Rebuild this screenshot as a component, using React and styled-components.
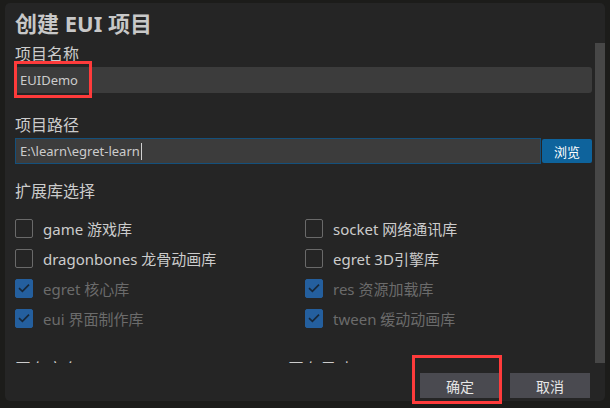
import React from "react";
import styled, { createGlobalStyle } from "styled-components";

const Global = createGlobalStyle`
  html, body { margin: 0; padding: 0; background: #1c1c1a; }
  body { font-family: "Noto Sans", "Noto Sans CJK SC", sans-serif; }
  * { box-sizing: border-box; }
`;

const Page = styled.div`
  width: 610px;
  height: 408px;
  padding: 3px 5px 0 5px;
  overflow: hidden;
`;

const Dialog = styled.div`
  position: relative;
  width: 600px;
  height: 398px;
  background: #252525;
  border-radius: 5px;
  display: flex;
  flex-direction: column;
`;

const Body = styled.div`
  height: 360px;
  display: flex;
  overflow: hidden;
`;

const Content = styled.div`
  flex: 1;
  padding: 5px 3px 0 10px;
  display: flex;
  flex-direction: column;
`;

const Track = styled.div`
  width: 10px;
  padding-top: 40px;
  display: flex;
`;

const Thumb = styled.div`
  flex: 1;
  background: #474747;
`;

const Title = styled.h1`
  margin: 0;
  font-size: 22px;
  line-height: 30px;
  font-weight: 700;
  color: #c8c8c8;
`;

const Label = styled.div`
  margin-top: ${(p) => p.$mt}px;
  font-size: 16px;
  line-height: 20px;
  color: #cccccc;
  font-family: "Noto Sans CJK SC", "Noto Sans", sans-serif;
`;

const Field = styled.div`
  margin-top: 4px;
  height: ${(p) => p.$h}px;
  background: #3c3c3c;
  border-radius: 3px;
  border: 1px solid ${(p) => (p.$focus ? "#14507c" : "transparent")};
  display: flex;
  align-items: center;
  padding-left: 4px;
  font-size: 13px;
  color: #cccccc;
  flex: 1;
`;

const Caret = styled.span`
  display: inline-block;
  width: 1px;
  height: 17px;
  background: #d0d0d0;
  margin-left: 1px;
`;

const PathRow = styled.div`
  margin-top: 4px;
  display: flex;
  align-items: center;
  gap: 1px;
  & > ${Field} { margin-top: 0; border-radius: 0; }
`;

const BrowseBtn = styled.button`
  width: 50px;
  height: 24px;
  border: none;
  border-radius: 2px;
  background: #0e639c;
  color: #ffffff;
  font-size: 13px;
  font-family: "Noto Sans CJK SC", sans-serif;
  padding: 0;
`;

const Grid = styled.div`
  margin-top: 13px;
  display: grid;
  grid-template-columns: 290px 1fr;
  grid-auto-rows: 30px;
`;

const Option = styled.div`
  display: flex;
  align-items: center;
  gap: 10px;
  font-size: 15px;
  color: ${(p) => (p.$checked ? "#6b6b6b" : "#cccccc")};
`;

const Box = styled.span`
  width: 18px;
  height: 19px;
  border-radius: 2px;
  border: 1px solid ${(p) => (p.$checked ? "#245f9e" : "#6a6a6a")};
  background: ${(p) => (p.$checked ? "#245f9e" : "transparent")};
  display: flex;
  align-items: center;
  justify-content: center;
  flex: none;
`;

const CutRow = styled.div`
  margin-top: 25px;
  display: grid;
  grid-template-columns: 273px 1fr;
`;

const Footer = styled.div`
  display: flex;
  justify-content: flex-end;
  gap: 10px;
  padding: 10px 15px 0 0;
`;

const FootBtn = styled.button`
  width: 80px;
  height: 25px;
  border: none;
  border-radius: 0;
  background: #4a4a50;
  color: #e6e6e6;
  font-size: 14px;
  font-family: "Noto Sans CJK SC", sans-serif;
  padding: 0;
`;

const Marker = styled.div`
  position: absolute;
  left: ${(p) => p.$x}px;
  top: ${(p) => p.$y}px;
  width: ${(p) => p.$w}px;
  height: ${(p) => p.$h}px;
  border: 3px solid #ff3b3b;
  pointer-events: none;
`;

const options = [
  ["game 游戏库", false],
  ["socket 网络通讯库", false],
  ["dragonbones 龙骨动画库", false],
  ["egret 3D引擎库", false],
  ["egret 核心库", true],
  ["res 资源加载库", true],
  ["eui 界面制作库", true],
  ["tween 缓动动画库", true],
];

function Check() {
  return (
    <svg width="14" height="14" viewBox="0 0 14 14">
      <path d="M2 7.2 L5.4 10.4 L12 3.6" fill="none" stroke="#17283a" strokeWidth="1.7" />
    </svg>
  );
}

export default function App() {
  return (
    <>
      <Global />
      <Page>
        <Dialog>
          <Body>
            <Content>
              <Title>创建 EUI 项目</Title>
              <Label $mt={5}>项目名称</Label>
              <Field as="div" $h={26} style={{ flex: "none" }}>EUIDemo</Field>
              <Label $mt={21}>项目路径</Label>
              <PathRow>
                <Field $h={26} $focus>
                  E:\learn\egret-learn
                  <Caret />
                </Field>
                <BrowseBtn>浏览</BrowseBtn>
              </PathRow>
              <Label $mt={16}>扩展库选择</Label>
              <Grid>
                {options.map(([t, c]) => (
                  <Option key={t} $checked={c}>
                    <Box $checked={c}>{c && <Check />}</Box>
                    {t}
                  </Option>
                ))}
              </Grid>
              <CutRow>
                <Label $mt={0}>画布方向</Label>
                <Label $mt={0}>画布尺寸</Label>
              </CutRow>
            </Content>
            <Track>
              <Thumb />
            </Track>
          </Body>
          <Footer>
            <FootBtn>确定</FootBtn>
            <FootBtn>取消</FootBtn>
          </Footer>
          <Marker $x={9} $y={58} $w={78} $h={37} />
          <Marker $x={407} $y={352} $w={90} $h={49} />
        </Dialog>
      </Page>
    </>
  );
}
